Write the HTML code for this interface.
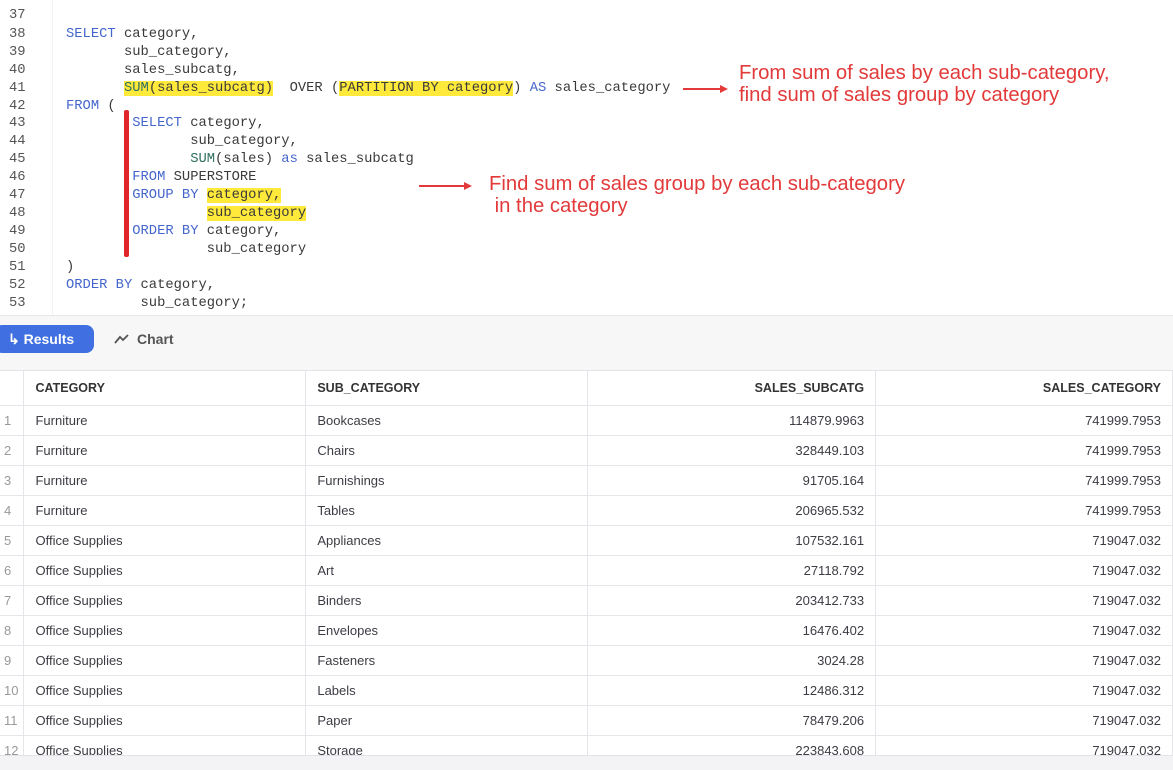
<!DOCTYPE html><html><head><style>
*{margin:0;padding:0;box-sizing:border-box}
body{width:1173px;height:770px;overflow:hidden;background:#fff;font-family:"Liberation Sans",sans-serif;position:relative}
.ln{position:absolute;left:9px;font:13.8px "Liberation Mono",monospace;color:#555;line-height:18px}
.cl{position:absolute;left:66px;font:13.8px "Liberation Mono",monospace;color:#3a3a3a;line-height:18px;white-space:pre}
.k{color:#4466cc}.f{color:#2f6f5f}
.h{background:#ffe93a}
.note{position:absolute;color:#e23a3a;font-size:20.3px;line-height:22px}
.arr{position:absolute;height:2px;background:#e23a3a}
.arr:after{content:"";position:absolute;right:-2px;top:-3px;border-left:8px solid #e23a3a;border-top:4px solid transparent;border-bottom:4px solid transparent}
table{position:absolute;top:371px;left:0;border-collapse:collapse;font-size:13px;color:#3c3c44}
td,th{height:30px;border-bottom:1px solid #e6e6ea;border-right:1px solid #e6e6ea;padding:0 11px;white-space:nowrap}
th{height:34px;font-weight:bold;font-size:12.5px;text-align:left;color:#333}
td.n{color:#999;padding:0 0 0 4px;text-align:left}
.r{text-align:right}
</style></head><body>
<div style="position:absolute;left:52px;top:0;width:1px;height:315px;background:#f2f2f2"></div>
<div style="position:absolute;left:0;top:2px;width:1173px;height:315px">
<div class="ln" style="top:5px">37</div>
<div class="ln" style="top:24px">38</div><div class="ln" style="top:42px">39</div><div class="ln" style="top:60px">40</div><div class="ln" style="top:78px">41</div><div class="ln" style="top:96px">42</div><div class="ln" style="top:113px">43</div><div class="ln" style="top:131px">44</div><div class="ln" style="top:149px">45</div><div class="ln" style="top:167px">46</div><div class="ln" style="top:185px">47</div><div class="ln" style="top:203px">48</div><div class="ln" style="top:221px">49</div><div class="ln" style="top:239px">50</div><div class="ln" style="top:257px">51</div><div class="ln" style="top:275px">52</div><div class="ln" style="top:293px">53</div>
<div class="cl" style="top:24px"><span class="k">SELECT</span> category,</div>
<div class="cl" style="top:42px">       sub_category,</div>
<div class="cl" style="top:60px">       sales_subcatg,</div>
<div class="cl" style="top:78px">       <span class="h"><span class="f">SUM</span>(sales_subcatg)</span>  OVER (<span class="h">PARTITION BY category</span>) <span class="k">AS</span> sales_category</div>
<div class="cl" style="top:96px"><span class="k">FROM</span> (</div>
<div class="cl" style="top:113px">        <span class="k">SELECT</span> category,</div>
<div class="cl" style="top:131px">               sub_category,</div>
<div class="cl" style="top:149px">               <span class="f">SUM</span>(sales) <span class="k">as</span> sales_subcatg</div>
<div class="cl" style="top:167px">        <span class="k">FROM</span> SUPERSTORE</div>
<div class="cl" style="top:185px">        <span class="k">GROUP BY</span> <span class="h">category,</span></div>
<div class="cl" style="top:203px">                 <span class="h">sub_category</span></div>
<div class="cl" style="top:221px">        <span class="k">ORDER BY</span> category,</div>
<div class="cl" style="top:239px">                 sub_category</div>
<div class="cl" style="top:257px">)</div>
<div class="cl" style="top:275px"><span class="k">ORDER BY</span> category,</div>
<div class="cl" style="top:293px">         sub_category;</div>
</div>
<div style="position:absolute;left:124px;top:110px;width:5px;height:147px;background:#e0252b;border-radius:2px"></div>
<div class="arr" style="left:683px;top:88px;width:43px"></div>
<div class="note" style="left:739px;top:62px">From sum of sales by each sub-category,<br>find sum of sales group by category</div>
<div class="arr" style="left:419px;top:185px;width:51px"></div>
<div class="note" style="left:489px;top:173px">Find sum of sales group by each sub-category<br>&nbsp;in the category</div>
<div style="position:absolute;left:0;top:315px;width:1173px;height:56px;background:#f7f7f8;border-top:1px solid #e8e8ec;border-bottom:1px solid #e2e2e8"></div>
<div style="position:absolute;left:-6px;top:325px;width:100px;height:28px;background:#3f6fe0;border-radius:8px;color:#fff;font-weight:bold;font-size:14px;line-height:28px;padding-left:14px">↳ Results</div>
<svg style="position:absolute;left:114px;top:333px" width="16" height="12" viewBox="0 0 16 12"><polyline points="1,10 6,4 9,7 14,2" fill="none" stroke="#555" stroke-width="1.8"/></svg>
<div style="position:absolute;left:137px;top:325px;height:28px;color:#555;font-size:14px;line-height:28px;font-weight:bold">Chart</div>
<div style="position:absolute;left:0;top:362px;width:1173px;height:9px;background:#f7f7f8;border-bottom:1px solid #e2e2e8"></div>
<table>
<tr><th style="width:24px;padding:0"></th><th style="width:282px">CATEGORY</th><th style="width:282px">SUB_CATEGORY</th><th class="r" style="width:288px">SALES_SUBCATG</th><th class="r" style="width:297px">SALES_CATEGORY</th></tr>
<tr><td class="n">1</td><td>Furniture</td><td>Bookcases</td><td class="r">114879.9963</td><td class="r">741999.7953</td></tr>
<tr><td class="n">2</td><td>Furniture</td><td>Chairs</td><td class="r">328449.103</td><td class="r">741999.7953</td></tr>
<tr><td class="n">3</td><td>Furniture</td><td>Furnishings</td><td class="r">91705.164</td><td class="r">741999.7953</td></tr>
<tr><td class="n">4</td><td>Furniture</td><td>Tables</td><td class="r">206965.532</td><td class="r">741999.7953</td></tr>
<tr><td class="n">5</td><td>Office Supplies</td><td>Appliances</td><td class="r">107532.161</td><td class="r">719047.032</td></tr>
<tr><td class="n">6</td><td>Office Supplies</td><td>Art</td><td class="r">27118.792</td><td class="r">719047.032</td></tr>
<tr><td class="n">7</td><td>Office Supplies</td><td>Binders</td><td class="r">203412.733</td><td class="r">719047.032</td></tr>
<tr><td class="n">8</td><td>Office Supplies</td><td>Envelopes</td><td class="r">16476.402</td><td class="r">719047.032</td></tr>
<tr><td class="n">9</td><td>Office Supplies</td><td>Fasteners</td><td class="r">3024.28</td><td class="r">719047.032</td></tr>
<tr><td class="n">10</td><td>Office Supplies</td><td>Labels</td><td class="r">12486.312</td><td class="r">719047.032</td></tr>
<tr><td class="n">11</td><td>Office Supplies</td><td>Paper</td><td class="r">78479.206</td><td class="r">719047.032</td></tr>
<tr><td class="n">12</td><td>Office Supplies</td><td>Storage</td><td class="r">223843.608</td><td class="r">719047.032</td></tr>
</table>
<div style="position:absolute;left:0;top:755px;width:1173px;height:15px;background:#f3f3f5;border-top:1px solid #e2e2e8"></div>
</body></html>
